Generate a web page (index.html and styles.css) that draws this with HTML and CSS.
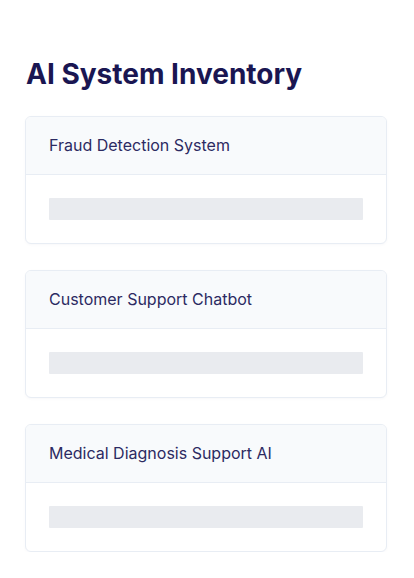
FILE: index.html
```html
<!DOCTYPE html>
<html lang="en">
<head>
<meta charset="utf-8">
<title>AI System Inventory</title>
<link rel="stylesheet" href="styles.css">
</head>
<body>
<main class="page">
  <h1 class="title">AI System Inventory</h1>
  <section class="list">
    <article class="card">
      <header class="card-head">Fraud Detection System</header>
      <div class="card-body"><div class="skeleton"></div></div>
    </article>
    <article class="card">
      <header class="card-head">Customer Support Chatbot</header>
      <div class="card-body"><div class="skeleton"></div></div>
    </article>
    <article class="card">
      <header class="card-head">Medical Diagnosis Support AI</header>
      <div class="card-body"><div class="skeleton"></div></div>
    </article>
  </section>
</main>
</body>
</html>
```
FILE: styles.css
```css
* { box-sizing: border-box; }
html, body { margin: 0; padding: 0; background: #ffffff; }
body { font-family: Inter, "Noto Sans", sans-serif; }
.page {
  width: 362px;
  margin-left: 25px;
  padding-top: 56px;
}
.title {
  margin: 0 0 24px 1px;
  font-size: 28px;
  line-height: 36px;
  font-weight: 700;
  color: #1a1652;
  letter-spacing: 0;
}
.list {
  display: flex;
  flex-direction: column;
  gap: 26px;
}
.card {
  border: 1px solid #e8edf4;
  border-radius: 6px;
  background: #ffffff;
  overflow: hidden;
  box-shadow: 0 1px 3px rgba(30, 40, 80, 0.03);
}
.card-head {
  height: 58px;
  padding: 0 23px 1px;
  display: flex;
  align-items: center;
  background: #f8fafc;
  border-bottom: 1px solid #e8edf4;
  font-size: 16px;
  color: #2c2a62;
}
.card-body {
  height: 68px;
  padding: 23px 23px 0;
}
.skeleton {
  height: 22px;
  background: #e9ebef;
  border-radius: 1px;
}
```
